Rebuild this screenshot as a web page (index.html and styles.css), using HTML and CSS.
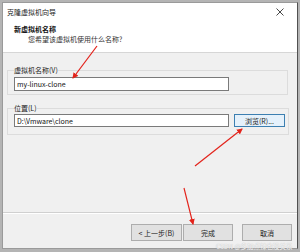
FILE: index.html
```html
<!DOCTYPE html>
<html lang="zh-CN">
<head>
  <meta charset="UTF-8" />
  <meta name="viewport" content="width=device-width, initial-scale=1.0"/>
  <title>克隆虚拟机向导</title>
  <link rel="stylesheet" href="styles.css">
</head>
<body>
  <div class="window">
    <div class="titlebar">
      <span class="title">克隆虚拟机向导</span>
      <svg class="close" width="8" height="8" viewBox="0 0 8 8">
        <path d="M0.5 0.5 L7.5 7.5 M7.5 0.5 L0.5 7.5" stroke="#333" stroke-width="0.9" fill="none"/>
      </svg>
    </div>

    <div class="header">
      <h2>新虚拟机名称</h2>
      <p>您希望该虚拟机使用什么名称?</p>
    </div>

    <div class="content">
      <fieldset class="group">
        <legend>虚拟机名称(V)</legend>
        <div class="row">
          <input class="field" type="text" value="my-linux-clone" />
        </div>
      </fieldset>

      <fieldset class="group group-loc">
        <legend>位置(L)</legend>
        <div class="row">
          <input class="field" type="text" value="D:\Vmware\clone" />
          <button class="btn btn-browse">浏览(R)...</button>
        </div>
      </fieldset>
    </div>

    <div class="footer">
      <button class="btn">&lt; 上一步(B)</button>
      <button class="btn btn-finish">完成</button>
      <button class="btn btn-cancel">取消</button>
    </div>
  </div>

  <svg class="arrows" width="300" height="252" viewBox="0 0 300 252">
    <defs>
      <marker id="head" markerWidth="6" markerHeight="6" refX="5" refY="3" orient="auto" markerUnits="userSpaceOnUse">
        <path d="M0 0 L6 3 L0 6 Z" fill="#e3231b"/>
      </marker>
    </defs>
    <line x1="97" y1="46" x2="73" y2="78" stroke="#e3231b" stroke-width="1.2" marker-end="url(#head)"/>
    <line x1="195" y1="166" x2="242" y2="129" stroke="#e3231b" stroke-width="1.2" marker-end="url(#head)"/>
    <line x1="184" y1="188" x2="193" y2="224" stroke="#e3231b" stroke-width="1.2" marker-end="url(#head)"/>
  </svg>

  <div class="watermark">CSDN @多加点辣也没关系</div>
</body>
</html>
```

FILE: styles.css
```css
* {
  margin: 0;
  padding: 0;
  box-sizing: border-box;
  font-family: "Noto Sans CJK SC", "Noto Sans", sans-serif;
}

html, body {
  width: 300px;
  height: 252px;
  overflow: hidden;
}

body {
  background: #b4b4b4;
  padding: 2px 2px 3px 2px;
  position: relative;
}

.window {
  width: 296px;
  height: 247px;
  background: #f0f0f0;
  border: 1px solid #9a9a9a;
  border-right-color: #505050;
  display: flex;
  flex-direction: column;
}

.titlebar {
  height: 17px;
  background: #fff;
  display: flex;
  align-items: center;
  justify-content: space-between;
  padding: 0 13px 0 4px;
}

.title {
  font-size: 7px;
  color: #222;
  line-height: 10px;
}

.header {
  background: #fff;
  height: 33px;
  padding: 4px 0 0 11px;
  border-bottom: 1px solid #d6d6d6;
}

.header h2 {
  font-size: 7px;
  font-weight: bold;
  color: #111;
  line-height: 10px;
}

.header p {
  font-size: 7px;
  color: #333;
  line-height: 10px;
  padding-left: 14px;
}

.content {
  flex: 1;
  padding: 12px 9px 0 4px;
}

.group {
  border: 1px solid #dcdcdc;
  padding: 0 3px 3px 6px;
}

.group legend {
  font-size: 7px;
  line-height: 10px;
  color: #222;
  padding: 0;
}

.group-loc {
  margin-top: 8px;
  padding-bottom: 7px;
}

.row {
  display: flex;
  align-items: center;
  margin-top: 2px;
}

.group-loc .row {
  margin-top: 1px;
}

.field {
  width: 215px;
  height: 14px;
  border: 1px solid #7a7a7a;
  background: #fff;
  font-size: 7px;
  color: #111;
  padding: 0 2px;
  outline: none;
}

.group-loc .field {
  height: 13px;
}

.btn {
  width: 51px;
  height: 17px;
  background: #e1e1e1;
  border: 1px solid #adadad;
  font-size: 7px;
  color: #222;
}

.btn-browse {
  margin-left: 5px;
  height: 13px;
  border-color: #3c7fb1;
  background: #e5f1fb;
}

.footer {
  height: 36px;
  border-top: 1px solid #d0d0d0;
  box-shadow: inset 0 1px 0 #fff;
  display: flex;
  justify-content: flex-end;
  padding: 11px 5px 0 0;
}

.btn-finish {
  width: 50px;
  margin-left: 1px;
}

.btn-cancel {
  width: 50px;
  margin-left: 9px;
}

.arrows {
  position: absolute;
  left: 0;
  top: 0;
}

.watermark {
  position: absolute;
  left: 216px;
  top: 242px;
  font-size: 6.5px;
  line-height: 9px;
  color: #f6f6f6;
  text-shadow: 0 0 1px #aaa;
}
```
